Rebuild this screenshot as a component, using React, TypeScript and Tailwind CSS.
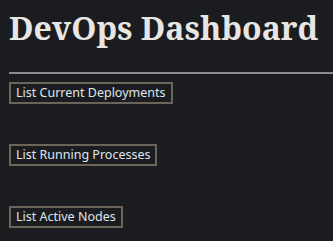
export default function App() {
  const items = ['List Current Deployments', 'List Running Processes', 'List Active Nodes'];
  return (
    <div className="min-h-screen bg-[#1b1c1f] pl-[9px] pt-[9px] text-[#e8e6e3]">
      <h1 className="font-['Noto_Serif',serif] text-[32px] font-bold leading-[38px]">DevOps Dashboard</h1>
      <hr className="mt-[25px] border-t-2 border-[#8a8a8a]" />
      <div className="flex flex-col items-start gap-[40px] pt-[8px]">
        {items.map((label) => (
          <button
            key={label}
            className="border-2 border-[#6b6459] bg-transparent px-[5px] py-0 font-['Noto_Sans',sans-serif] text-[12.5px] leading-[18px] text-[#dfe6ee]"
          >
            {label}
          </button>
        ))}
      </div>
    </div>
  );
}
